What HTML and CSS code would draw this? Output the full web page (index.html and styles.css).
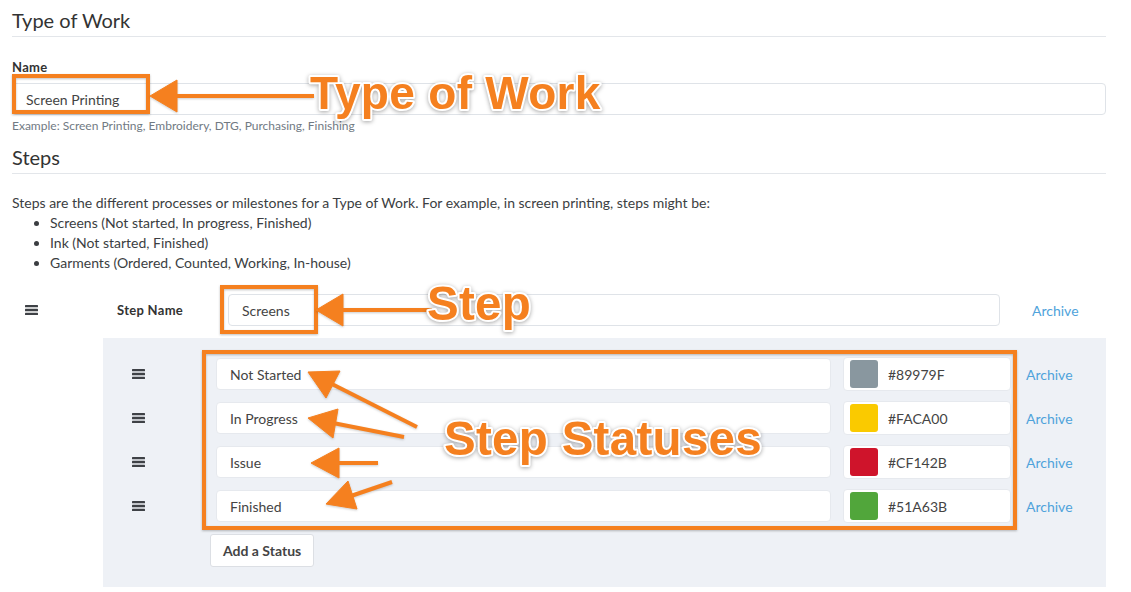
FILE: index.html
```html
<!DOCTYPE html>
<html lang="en">
  <head>
    <meta charset="UTF-8" />
    <meta name="viewport" content="width=device-width, initial-scale=1.0" />
    <title>Type of Work</title>
    <link rel="stylesheet" href="styles.css">
  </head>
  <body>
    <main class="page">
      <section class="work-type">
        <h2 class="section-title first">Type of Work</h2>
        <label class="field-label" for="workName">Name</label>
        <input class="text-input" id="workName" type="text" value="Screen Printing" />
        <p class="help-text">Example: Screen Printing, Embroidery, DTG, Purchasing, Finishing</p>
      </section>

      <section class="steps">
        <h2 class="section-title">Steps</h2>
        <p class="intro">Steps are the different processes or milestones for a Type of Work. For example, in screen printing, steps might be:</p>
        <ul class="examples">
          <li>Screens (Not started, In progress, Finished)</li>
          <li>Ink (Not started, Finished)</li>
          <li>Garments (Ordered, Counted, Working, In-house)</li>
        </ul>

        <div class="step">
          <div class="step-row">
            <span class="handle">
              <svg width="13" height="10" viewBox="0 0 13 10"><rect y="0" width="13" height="2.3" rx="0.5"/><rect y="3.85" width="13" height="2.3" rx="0.5"/><rect y="7.7" width="13" height="2.3" rx="0.5"/></svg>
            </span>
            <span class="step-label">Step Name</span>
            <input class="text-input step-input" type="text" value="Screens" />
            <a href="#" class="archive step-archive">Archive</a>
          </div>

          <div class="status-panel">
            <div class="status-row">
              <span class="handle">
                <svg width="13" height="10" viewBox="0 0 13 10"><rect y="0" width="13" height="2.3" rx="0.5"/><rect y="3.85" width="13" height="2.3" rx="0.5"/><rect y="7.7" width="13" height="2.3" rx="0.5"/></svg>
              </span>
              <input class="text-input status-input" type="text" value="Not Started" />
              <div class="color-field"><span class="swatch" style="background: #89979f"></span><span class="hex">#89979F</span></div>
              <a href="#" class="archive">Archive</a>
            </div>
            <div class="status-row">
              <span class="handle">
                <svg width="13" height="10" viewBox="0 0 13 10"><rect y="0" width="13" height="2.3" rx="0.5"/><rect y="3.85" width="13" height="2.3" rx="0.5"/><rect y="7.7" width="13" height="2.3" rx="0.5"/></svg>
              </span>
              <input class="text-input status-input" type="text" value="In Progress" />
              <div class="color-field"><span class="swatch" style="background: #faca00"></span><span class="hex">#FACA00</span></div>
              <a href="#" class="archive">Archive</a>
            </div>
            <div class="status-row">
              <span class="handle">
                <svg width="13" height="10" viewBox="0 0 13 10"><rect y="0" width="13" height="2.3" rx="0.5"/><rect y="3.85" width="13" height="2.3" rx="0.5"/><rect y="7.7" width="13" height="2.3" rx="0.5"/></svg>
              </span>
              <input class="text-input status-input" type="text" value="Issue" />
              <div class="color-field"><span class="swatch" style="background: #cf142b"></span><span class="hex">#CF142B</span></div>
              <a href="#" class="archive">Archive</a>
            </div>
            <div class="status-row">
              <span class="handle">
                <svg width="13" height="10" viewBox="0 0 13 10"><rect y="0" width="13" height="2.3" rx="0.5"/><rect y="3.85" width="13" height="2.3" rx="0.5"/><rect y="7.7" width="13" height="2.3" rx="0.5"/></svg>
              </span>
              <input class="text-input status-input" type="text" value="Finished" />
              <div class="color-field"><span class="swatch" style="background: #51a63b"></span><span class="hex">#51A63B</span></div>
              <a href="#" class="archive">Archive</a>
            </div>
            <button class="add-status" type="button">Add a Status</button>
          </div>
        </div>
      </section>

      <!-- callouts drawn on top of the form -->
      <svg class="callouts" width="1131" height="592" viewBox="0 0 1131 592">
        <g class="marks">
          <rect x="14" y="76" width="134" height="36" />
          <rect x="222" y="287" width="94" height="45" />
          <rect x="204" y="352" width="811" height="176" />
        </g>
        <g class="arrows">
          <line x1="168" y1="96" x2="314" y2="96" />
          <polygon points="150,96 177,80 177,112" />

          <line x1="334" y1="310" x2="432" y2="310" />
          <polygon points="316,310 343,294 343,326" />

          <line x1="417" y1="427" x2="326" y2="381" />
          <polygon points="308,372 340,371 326,398" />

          <line x1="404" y1="437" x2="328" y2="422" />
          <polygon points="308,418 338,409 333,438" />

          <line x1="378" y1="463" x2="331" y2="463" />
          <polygon points="311,463 339,448 339,478" />

          <line x1="392" y1="482" x2="345" y2="498" />
          <polygon points="326,504 348,481 357,509" />
        </g>
        <text class="callout" x="310" y="109">Type of Work</text>
        <text class="callout large" x="427" y="320">Step</text>
        <text class="callout large" x="444" y="455">Step Statuses</text>
      </svg>
    </main>
  </body>
</html>
```

FILE: styles.css
```css
:root {
  --text-color: #3b3e42;
  --muted-color: #717a83;
  --border-color: #dfe3e8;
  --panel-color: #eef1f6;
  --link-color: #4fa3db;
  --callout-color: #f5801f;
}

html {
  overflow: hidden;
}

body {
  margin: 0;
  font-family: Lato, "Open Sans", sans-serif;
  color: var(--text-color);
  background-color: white;
}

.page {
  position: relative;
  display: flow-root;
  padding: 0 25px 0 12px;
}

.section-title {
  margin: 12px 0 0;
  padding-bottom: 4px;
  font-size: 20px;
  font-weight: normal;
  line-height: 24px;
  color: #333;
  border-bottom: 1px solid #e3e6ea;
}

.section-title.first {
  margin-top: 8px;
}

.field-label {
  display: block;
  margin-top: 22px;
  font-size: 13px;
  font-weight: bold;
  letter-spacing: 0.3px;
  line-height: 16px;
  color: #333;
}

.text-input {
  display: block;
  box-sizing: border-box;
  width: 100%;
  height: 32px;
  margin: 8px 0 0;
  padding: 0 13px;
  font-family: inherit;
  font-size: 14px;
  color: #444;
  background-color: white;
  border: 1px solid var(--border-color);
  border-radius: 4px;
  outline: none;
}

.help-text {
  margin: 4px 0 0;
  font-size: 12px;
  line-height: 14px;
  color: var(--muted-color);
}

.intro {
  margin: 19px 0 0;
  font-size: 14px;
  line-height: 20px;
}

.examples {
  margin: 0;
  padding-left: 38px;
  font-size: 14px;
  line-height: 20px;
}

/* step row */
.step {
  margin-top: 21px;
}

.step-row {
  display: flex;
  align-items: center;
  height: 32px;
}

.handle {
  display: flex;
  align-items: center;
  flex: none;
  box-sizing: border-box;
}

.handle svg {
  fill: #3e4146;
}

.step-row .handle {
  width: 91px;
  padding-left: 13px;
}

.step-label {
  flex: none;
  box-sizing: border-box;
  width: 125px;
  padding-left: 14px;
  font-size: 13px;
  font-weight: bold;
  letter-spacing: 0.3px;
  color: #333;
}

.step-input {
  flex: 1;
  margin: 0;
}

.archive {
  flex: none;
  box-sizing: border-box;
  font-size: 14px;
  color: var(--link-color);
  text-decoration: none;
}

.step-archive {
  width: 106px;
  padding-left: 32px;
}

/* statuses */
.status-panel {
  margin: 12px 0 0 91px;
  padding: 20px 0;
  background-color: var(--panel-color);
}

.status-row {
  display: flex;
  align-items: center;
  height: 32px;
  margin-bottom: 12px;
}

.status-row .handle {
  width: 113px;
  padding-left: 29px;
}

.status-input {
  flex: 1;
  margin: 0;
  border-color: #e6e9ee;
}

.color-field {
  display: flex;
  align-items: center;
  box-sizing: border-box;
  width: 168px;
  height: 34px;
  margin-left: 12px;
  padding: 0 6px;
  background-color: white;
  border: 1px solid #e6e9ee;
  border-radius: 4px;
}

.swatch {
  width: 28px;
  height: 28px;
  border-radius: 3px;
}

.hex {
  margin-left: 10px;
  font-size: 14px;
  color: #444;
}

.status-row .archive {
  width: 95px;
  padding-left: 15px;
}

.add-status {
  display: block;
  height: 33px;
  margin: 11px 0 0 107px;
  padding: 0 12px;
  font-family: inherit;
  font-size: 14px;
  font-weight: bold;
  color: #444;
  background-color: white;
  border: 1px solid #dcdfe4;
  border-radius: 3px;
}

/* callout layer */
.callouts {
  position: absolute;
  top: 0;
  left: 0;
  pointer-events: none;
}

.marks rect {
  fill: none;
  stroke: var(--callout-color);
  stroke-width: 4;
  filter: drop-shadow(0 1px 1px rgba(0, 0, 0, 0.25));
}

.arrows {
  fill: var(--callout-color);
  stroke: var(--callout-color);
  filter: drop-shadow(0 1px 1px rgba(0, 0, 0, 0.2));
}

.arrows line {
  stroke-width: 4;
}

.arrows polygon {
  stroke-width: 1;
  stroke-linejoin: round;
}

.callout {
  font-family: "Liberation Sans", Arial, sans-serif;
  font-size: 46px;
  font-weight: bold;
  letter-spacing: 0.3px;
  fill: var(--callout-color);
  stroke: white;
  stroke-width: 4;
  stroke-linejoin: round;
  paint-order: stroke;
  filter: drop-shadow(0 1px 2px rgba(0, 0, 0, 0.35));
}

.callout.large {
  font-size: 47.5px;
}
```
